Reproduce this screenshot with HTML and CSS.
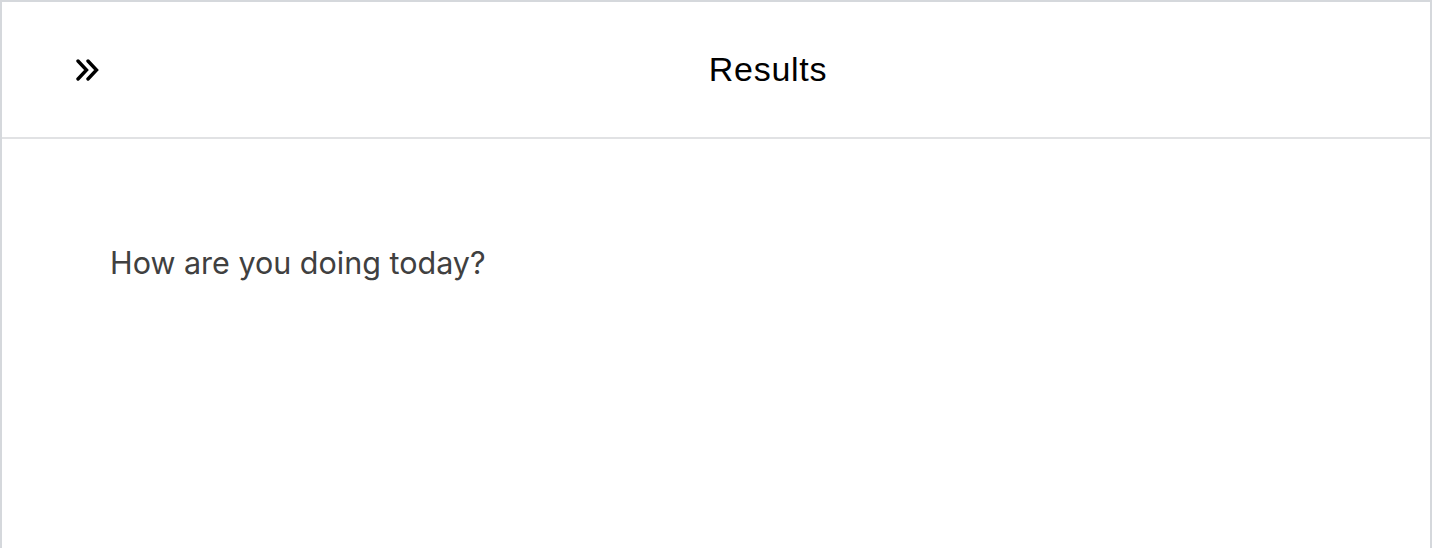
FILE: index.html
```html
<!DOCTYPE html>
<html lang="en">
<head>
<meta charset="utf-8">
<title>Results</title>
<link rel="stylesheet" href="styles.css">
</head>
<body>
<div class="panel">
  <header class="panel-header">
    <button class="toggle" aria-label="Expand">
      <svg width="24" height="22" viewBox="0 0 24 22" fill="none" stroke="#000" stroke-width="3.4" stroke-linecap="round" stroke-linejoin="miter">
        <polyline points="2,2 10.5,11 2,20"/>
        <polyline points="12,2 20.5,11 12,20"/>
      </svg>
    </button>
    <h1 class="title">Results</h1>
  </header>
  <main class="panel-body">
    <p class="message">How are you doing today?</p>
  </main>
</div>
</body>
</html>
```
FILE: styles.css
```css
html, body {
  margin: 0;
  padding: 0;
  background: #ffffff;
}
body {
  font-family: "Liberation Sans", Arial, sans-serif;
  height: 548px;
  overflow: hidden;
}
.panel {
  box-sizing: border-box;
  height: 560px;
  border: 2px solid #d5d8dc;
  border-bottom: none;
  display: flex;
  flex-direction: column;
}
.panel-header {
  height: 135px;
  border-bottom: 2px solid #e1e2e4;
  display: flex;
  align-items: center;
}
.toggle {
  width: 104px;
  height: 100%;
  padding: 0 0 0 74px;
  margin: 0;
  border: none;
  background: none;
  display: flex;
  align-items: center;
  justify-content: flex-start;
  cursor: pointer;
}
.toggle svg {
  display: block;
}
.title {
  flex: 1;
  margin: 0;
  text-align: center;
  font-family: "Liberation Sans", Arial, sans-serif;
  font-weight: 400;
  font-size: 34px;
  letter-spacing: 0.75px;
  color: #000;
}
.panel-body {
  padding: 105px 108px;
}
.message {
  margin: 0;
  font-family: Inter, "Open Sans", sans-serif;
  font-size: 30.5px;
  color: #404040;
}
```
